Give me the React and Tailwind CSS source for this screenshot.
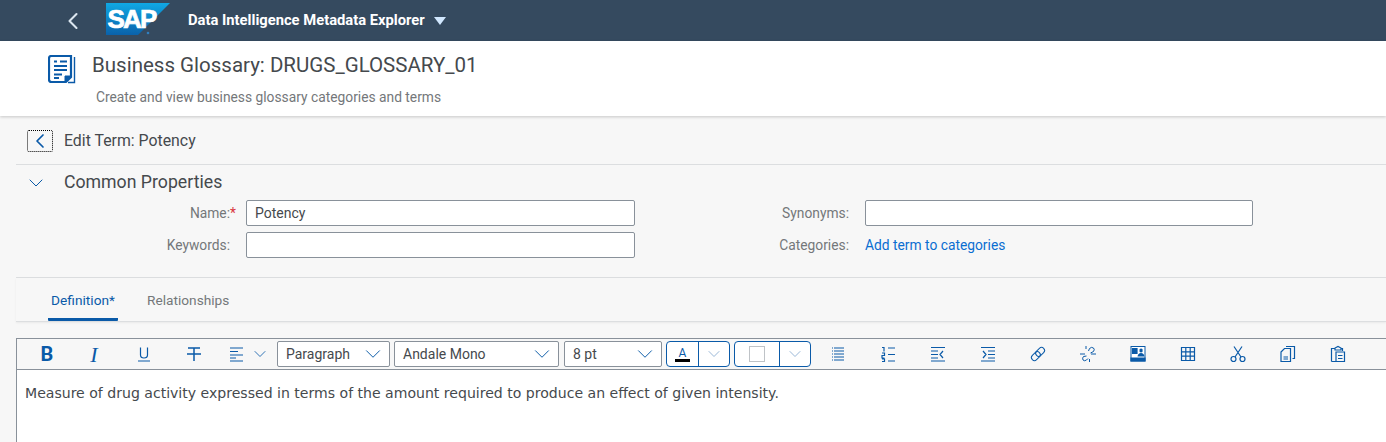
import { ChevronDown, ChevronLeft } from 'lucide-react'

const BLUE = '#0a5aa8'

function Glyph({ children, w = 50, ml = 0 }) {
  return (
    <div className="flex h-full shrink-0 items-center justify-center" style={{ width: w, marginLeft: ml }}>
      <svg width="18" height="18" viewBox="0 0 18 18" fill="none" stroke={BLUE} strokeWidth="1.2">
        {children}
      </svg>
    </div>
  )
}

function SapLogo() {
  return (
    <svg width="64" height="32" viewBox="0 0 64 32" className="shrink-0">
      <defs>
        <linearGradient id="sapfill" x1="0" y1="0" x2="0" y2="1">
          <stop offset="0" stopColor="#10a8e4" />
          <stop offset="1" stopColor="#0a62ab" />
        </linearGradient>
      </defs>
      <path d="M0 0H64L32 32H0Z" fill="url(#sapfill)" />
      <text x="1.5" y="25" fill="#fff" stroke="#fff" strokeWidth="0.7" fontFamily="Liberation Sans" fontWeight="700" fontSize="26" letterSpacing="-1.8">SAP</text>
      <circle cx="42" cy="30" r="1.3" fill="#2f7fc0" />
    </svg>
  )
}

function GlossaryIcon() {
  return (
    <svg width="29" height="29" viewBox="0 0 29 29" fill="none" stroke={BLUE} className="shrink-0">
      <path d="M1 3.5Q1 1 3.5 1H23V22L18 27H3.5Q1 27 1 24.5Z" strokeWidth="2.2" fill="#fff" />
      <path d="M26.5 2V27.5H20" strokeWidth="1.4" />
      <path d="M6 6.5H9M12 6.5H19M6 11H19M6 15H19M6 19.5H14M6 23H11" strokeWidth="2.2" />
      <path d="M17 27V21H23Z" fill={BLUE} strokeWidth="1" />
    </svg>
  )
}

function Field({ label, required, value, w = 389, children }) {
  return (
    <div className="flex items-center">
      <div className="flex w-[223px] shrink-0 justify-end text-[13.8px] text-[#74777a]">
        {label}:
        {required
          ? <span className="w-[9px] text-[#d9363e]">*</span>
          : <span className="w-[9px]" />}
      </div>
      {children || (
        <div className="ml-[7px] flex h-[26px] shrink-0 items-center rounded-[2px] border border-[#89919a] bg-white pl-[8px] text-[14px] text-[#45494d]" style={{ width: w }}>
          {value}
        </div>
      )}
    </div>
  )
}

function Select({ label, w, ml = 0 }) {
  return (
    <div className="flex h-[26px] shrink-0 items-center justify-between rounded-[2px] border border-[#89919a] bg-white pl-[8px] pr-[3px] text-[14px] text-[#45494d]" style={{ width: w, marginLeft: ml }}>
      {label}
      <ChevronDown size={26} strokeWidth={0.9} color={BLUE} />
    </div>
  )
}

function Split({ w, main, children }) {
  return (
    <div className="flex h-[26px] shrink-0 rounded-[4px] border border-[#0a5aa8] bg-white" style={{ width: w }}>
      <div className="flex items-center justify-center border-r border-[#0a5aa8]" style={{ width: main }}>
        {children}
      </div>
      <div className="flex flex-1 items-center justify-center">
        <ChevronDown size={20} strokeWidth={1.1} color="#8fb0d3" />
      </div>
    </div>
  )
}

export default function App() {
  return (
    <div className="h-[442px] w-[1386px] overflow-hidden bg-[#f7f7f7] font-['Roboto',sans-serif]">
      {/* Shell bar */}
      <header className="flex h-[41px] items-center bg-[#354a5f] pl-[59px]">
        <ChevronLeft size={28} strokeWidth={1.8} color="#dbe6f0" />
        <div className="ml-[19px] -mt-[3px]"><SapLogo /></div>
        <span className="ml-[18px] text-[14.75px] font-bold text-white">Data Intelligence Metadata Explorer</span>
        <svg width="12" height="8" viewBox="0 0 12 8" className="ml-[9px]"><path d="M0 0H12L6 8Z" fill="#d1e8ff" /></svg>
      </header>

      {/* Page title */}
      <div className="relative flex h-[75px] bg-white pl-[48px] pt-[14px] shadow-[0_1px_3px_rgba(0,0,0,0.2)]">
        <GlossaryIcon />
        <div className="ml-[15px] -mt-[2px]">
          <div className="text-[20.5px] leading-[24px] text-[#45494d]">Business Glossary: DRUGS_GLOSSARY_01</div>
          <div className="ml-[4px] mt-[12px] text-[13.8px] leading-[16px] text-[#74777a]">Create and view business glossary categories and terms</div>
        </div>
      </div>

      <div className="pl-[16px]">
        {/* Edit term header */}
        <div className="flex h-[49px] items-center border-b border-[#dcdee0] pl-[11px]">
          <div className="mt-[1px] flex h-[22px] w-[26px] items-center justify-center rounded-[2px] border border-dotted border-black">
            <ChevronLeft size={26} strokeWidth={1.7} color={BLUE} />
          </div>
          <span className="ml-[11px] mt-[1px] text-[15.85px] text-[#45494d]">Edit Term: Potency</span>
        </div>

        {/* Common properties */}
        <div className="flex h-[35px] items-center pl-[8px]">
          <ChevronDown size={24} strokeWidth={1} color={BLUE} />
          <span className="ml-[16px] text-[17.7px] text-[#45494d]">Common Properties</span>
        </div>
        <div className="grid h-[78px] grid-cols-[619px_1fr] content-start gap-y-[6px] border-b border-[#dcdee0]">
          <Field label="Name" required value="Potency" />
          <Field label="Synonyms" value="" w={388} />
          <Field label="Keywords" value="" />
          <Field label="Categories">
            <span className="ml-[7px] text-[13.8px] text-[#0a6ed1]">Add term to categories</span>
          </Field>
        </div>

        {/* Tabs */}
        <div className="flex h-[44px] items-end border-b border-[#dcdee0] pl-[32px] text-[13.7px] shadow-[0_1px_2px_rgba(0,0,0,0.06)]">
          <div className="flex h-[45px] w-[70px] justify-center rounded-b-[1px] border-b-[3px] border-[#0a5aa8] pt-[14px] text-[#0a5aa8]">Definition*</div>
          <div className="ml-[29px] h-[45px] pt-[14px] text-[#74777a]">Relationships</div>
        </div>

        {/* Editor */}
        <div className="mt-[16px] h-[110px] border-l border-t border-[#89919a] bg-white">
          <div className="flex h-[31px] items-center border-b border-[#89919a] bg-[#f7f7f7] pl-[5px]">
            <div className="flex h-full w-[50px] shrink-0 items-center justify-center text-[20px] font-bold text-[#0a5aa8]">B</div>
            <div className="flex h-full w-[44px] shrink-0 items-center justify-center font-['Liberation_Serif',serif] text-[22px] italic text-[#0a5aa8]">I</div>
            <Glyph w={56}>
              <path d="M5.5 2.5V10Q5.5 13 9 13T12.5 10V2.5M3 16H15" />
            </Glyph>
            <Glyph w={44}>
              <path d="M3 3H15M9 3V16M2 9H16" strokeWidth="1.5" />
            </Glyph>
            <Glyph w={42}>
              <path d="M2 3H15M2 6.5H10M2 10H15M2 13H8M2 16H15" />
            </Glyph>
            <div className="-ml-[5px] flex w-[14px] shrink-0 justify-center"><ChevronDown size={20} strokeWidth={1} color={BLUE} className="shrink-0" /></div>
            <div className="flex items-center gap-[4px] pl-[10px]">
              <Select label="Paragraph" w={113} />
              <Select label="Andale Mono" w={165} />
              <Select label="8 pt" w={98} ml={1} />
              <Split w={64} main={32}>
                <div className="flex flex-col items-center">
                  <span className="text-[12px] leading-[12px] text-[#0a5aa8]">A</span>
                  <span className="h-[3px] w-[15px] bg-black" />
                </div>
              </Split>
              <Split w={77} main={45}>
                <span className="h-[16px] w-[16px] border border-[#bfc3c7] bg-white" />
              </Split>
            </div>
            <Glyph w={50} ml={2}>
              <path d="M5 3H15M5 6H15M5 9H15M5 12H15M5 15H15M3 3H4M3 6H4M3 9H4M3 12H4M3 15H4" />
            </Glyph>
            <Glyph>
              <path d="M3 2.5H5V6.5M3 8H5.5V10.5H3V13H5.5M3 14H5.5V16.5H3M9 3H16M9 9.5H16M9 16H16" />
            </Glyph>
            <Glyph>
              <path d="M2 2.5H16M2 6H9M2 9.5H9M2 13H9M2 16H16M14 6L11 9.5L14 13" />
            </Glyph>
            <Glyph>
              <path d="M2 2.5H16M9 6H16M9 9.5H16M9 13H16M2 16H16M4 6L7 9.5L4 13" />
            </Glyph>
            <Glyph>
              <g transform="rotate(-45 9 9)" strokeWidth="1">
                <rect x="1" y="6" width="10" height="6" rx="3" />
                <rect x="7" y="6" width="10" height="6" rx="3" />
              </g>
            </Glyph>
            <Glyph>
              <path strokeWidth="1" d="M1 9H6M12 9H17M7 1V4M10.5 14V17M7.5 11L4.5 11.5Q3 13 4 15Q5.5 16.5 7.5 15L9 13.5M9.5 6L10.5 3.5Q12.5 1.5 14.5 3Q16 4.5 14.5 6.5L11.5 8" />
            </Glyph>
            <Glyph>
              <rect x="2" y="1.5" width="14" height="14.5" fill="#fff" stroke={BLUE} strokeWidth="1" />
              <path d="M2 13H16V16H2ZM3.5 3.5H8V8.5H3.5Z" fill={BLUE} stroke={BLUE} />
              <path d="M8.5 11.5Q9 8 12 8T15.5 11.5ZM10.5 5.5A1.6 1.6 0 1 0 13.6 5.5A1.6 1.6 0 1 0 10.5 5.5" fill={BLUE} stroke="none" />
            </Glyph>
            <Glyph>
              <path d="M2.5 2.5H15.5V15.5H2.5ZM2.5 6.8H15.5M2.5 11.2H15.5M6.8 2.5V15.5M11.2 2.5V15.5" />
            </Glyph>
            <Glyph>
              <circle cx="4.5" cy="14" r="2.5" />
              <circle cx="13.5" cy="14" r="2.5" />
              <path d="M6 12L13 1.5M12 12L5 1.5" />
            </Glyph>
            <Glyph>
              <path d="M2 7L5.5 3.5H11.5V16.5H2ZM4.5 12H9M4.5 14H9M7 1.5H15.5V13.5H13.5" />
            </Glyph>
            <Glyph>
              <path d="M2.5 16.5V3.5H6M12 3.5H13.5V6M6 5V3L9 1.5L12 3V5H6ZM7 7H15.5V16.5H7ZM9 10.5H13.5M9 13.5H13.5M2.5 16.5H7" />
            </Glyph>
          </div>
          <div className="pl-[8px] pt-[15px] font-['DejaVu_Sans',sans-serif] text-[14.07px] leading-[16px] text-[#45494d]">
            Measure of drug activity expressed in terms of the amount required to produce an effect of given intensity.
          </div>
        </div>
      </div>
    </div>
  )
}
